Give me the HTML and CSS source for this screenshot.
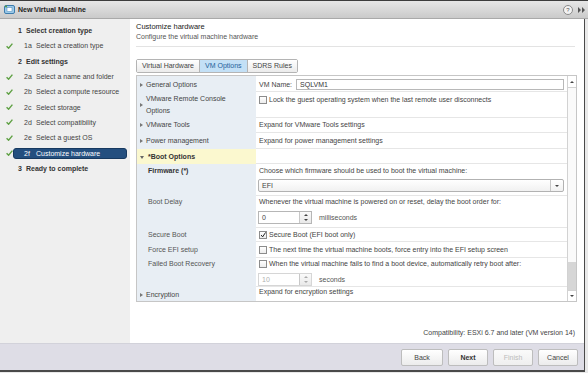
FILE: index.html
```html
<!DOCTYPE html>
<html lang="en">
<head>
  <meta charset="UTF-8" />
  <title>New Virtual Machine</title>
  <link rel="stylesheet" href="styles.css">
</head>
<body>
  <!-- Barra de título del asistente -->
  <div class="titlebar">
    <svg class="app-icon" viewBox="0 0 11 11">
      <rect x="0.5" y="1.5" width="10" height="8" rx="1.5" fill="#9ccbea" stroke="#3d7cad"/>
      <rect x="3" y="3.5" width="5" height="4" fill="#fff" stroke="#5a93c0" stroke-width="0.6"/>
      <circle cx="2" cy="2.5" r="1" fill="#4f9a3c"/>
    </svg>
    <span class="title">New Virtual Machine</span>
    <span class="spacer"></span>
    <span class="help">?</span>
    <svg class="expand" viewBox="0 0 7 6"><path d="M0 0l3 3-3 3zM4 0l3 3-3 3z" fill="#555"/></svg>
  </div>

  <div class="window">
    <div class="main">
      <!-- Pasos del asistente -->
      <div class="nav">
        <div class="step"><span class="num">1</span>Select creation type</div>
        <div class="sub"><svg class="check" viewBox="0 0 7 6"><path d="M0.6 3.2l2 2 3.8-4.6" fill="none" stroke="#5ea043" stroke-width="1.4"/></svg><span class="item"><span class="num">1a</span>Select a creation type</span></div>
        <div class="step"><span class="num">2</span>Edit settings</div>
        <div class="sub"><svg class="check" viewBox="0 0 7 6"><path d="M0.6 3.2l2 2 3.8-4.6" fill="none" stroke="#5ea043" stroke-width="1.4"/></svg><span class="item"><span class="num">2a</span>Select a name and folder</span></div>
        <div class="sub"><svg class="check" viewBox="0 0 7 6"><path d="M0.6 3.2l2 2 3.8-4.6" fill="none" stroke="#5ea043" stroke-width="1.4"/></svg><span class="item"><span class="num">2b</span>Select a compute resource</span></div>
        <div class="sub"><svg class="check" viewBox="0 0 7 6"><path d="M0.6 3.2l2 2 3.8-4.6" fill="none" stroke="#5ea043" stroke-width="1.4"/></svg><span class="item"><span class="num">2c</span>Select storage</span></div>
        <div class="sub"><svg class="check" viewBox="0 0 7 6"><path d="M0.6 3.2l2 2 3.8-4.6" fill="none" stroke="#5ea043" stroke-width="1.4"/></svg><span class="item"><span class="num">2d</span>Select compatibility</span></div>
        <div class="sub"><svg class="check" viewBox="0 0 7 6"><path d="M0.6 3.2l2 2 3.8-4.6" fill="none" stroke="#5ea043" stroke-width="1.4"/></svg><span class="item"><span class="num">2e</span>Select a guest OS</span></div>
        <div class="sub"><svg class="check" viewBox="0 0 7 6"><path d="M0.6 3.2l2 2 3.8-4.6" fill="none" stroke="#5ea043" stroke-width="1.4"/></svg><span class="item active"><span class="num">2f</span>Customize hardware</span></div>
        <div class="step"><span class="num">3</span>Ready to complete</div>
      </div>

      <!-- Contenido de la página -->
      <div class="content">
        <div class="head">
          <div class="head-title">Customize hardware</div>
          <div class="head-sub">Configure the virtual machine hardware</div>
        </div>

        <div class="tabs">
          <span class="tab">Virtual Hardware</span>
          <span class="tab active">VM Options</span>
          <span class="tab">SDRS Rules</span>
        </div>

        <div class="panel">
          <div class="rows">
            <div class="row">
              <div class="lbl lbl-first"><span class="caret"></span>General Options</div>
              <div class="val val-input"><span class="field-name">VM Name:</span><span class="text-input">SQLVM1</span></div>
            </div>
            <div class="row">
              <div class="lbl lbl-2"><span class="caret"></span><span>VMware Remote Console<br>Options</span></div>
              <div class="val"><span class="cb"></span>Lock the guest operating system when the last remote user disconnects</div>
            </div>
            <div class="row">
              <div class="lbl lbl-tight"><span class="caret"></span>VMware Tools</div>
              <div class="val val-tight">Expand for VMware Tools settings</div>
            </div>
            <div class="row">
              <div class="lbl"><span class="caret"></span>Power management</div>
              <div class="val">Expand for power management settings</div>
            </div>
            <div class="row">
              <div class="lbl lbl-open"><span class="caret down"></span>*Boot Options</div>
              <div class="val"></div>
            </div>
            <div class="row">
              <div class="lbl lbl-sub lbl-bold">Firmware (*)</div>
              <div class="val val-block">
                <div class="line">Choose which firmware should be used to boot the virtual machine:</div>
                <div class="select"><span class="select-text">EFI</span><span class="select-btn"><span class="tri-down"></span></span></div>
              </div>
            </div>
            <div class="row">
              <div class="lbl lbl-sub lbl-top">Boot Delay</div>
              <div class="val val-block val-top">
                <div class="line">Whenever the virtual machine is powered on or reset, delay the boot order for:</div>
                <div class="spin-row">
                  <span class="spinner"><span class="spin-text">0</span><span class="spin-btns"><span class="tri-up"></span><span class="tri-down"></span></span></span>
                  <span class="unit">milliseconds</span>
                </div>
              </div>
            </div>
            <div class="row">
              <div class="lbl lbl-sub lbl-mid">Secure Boot</div>
              <div class="val val-mid"><span class="cb checked"><svg viewBox="0 0 8 8"><path d="M1.5 4l2 2.5 4-6" fill="none" stroke="#222" stroke-width="1.3"/></svg></span>Secure Boot (EFI boot only)</div>
            </div>
            <div class="row">
              <div class="lbl lbl-sub">Force EFI setup</div>
              <div class="val"><span class="cb"></span>The next time the virtual machine boots, force entry into the EFI setup screen</div>
            </div>
            <div class="row">
              <div class="lbl lbl-sub lbl-top">Failed Boot Recovery</div>
              <div class="val val-block val-top val-last">
                <div class="line"><span class="cb"></span>When the virtual machine fails to find a boot device, automatically retry boot after:</div>
                <div class="spin-row">
                  <span class="spinner disabled"><span class="spin-text">10</span><span class="spin-btns"><span class="tri-up"></span><span class="tri-down"></span></span></span>
                  <span class="unit">seconds</span>
                </div>
              </div>
            </div>
            <div class="row">
              <div class="lbl lbl-end"><span class="caret"></span>Encryption</div>
              <div class="val val-end">Expand for encryption settings</div>
            </div>
          </div>
          <div class="scroll">
            <span class="scroll-btn"><span class="tri-up"></span></span>
            <span class="scroll-track"><span class="thumb"></span></span>
            <span class="scroll-btn"><span class="tri-down"></span></span>
          </div>
        </div>

        <div class="compat">Compatibility: ESXi 6.7 and later (VM version 14)</div>
      </div>
    </div>

    <!-- Botones del asistente -->
    <div class="footer">
      <button class="btn back">Back</button>
      <button class="btn next">Next</button>
      <button class="btn" disabled>Finish</button>
      <button class="btn">Cancel</button>
    </div>
  </div>
</body>
</html>
```

FILE: styles.css
```css
* {
  box-sizing: border-box;
}

body {
  margin: 0;
  background: #e9e9e9;
  font-family: "Liberation Sans", Arial, sans-serif;
  font-size: 7px;
  color: #333;
}

/* =================
   BARRA DE TÍTULO
   ================= */
.titlebar {
  width: 588px;
  height: 19px;
  display: flex;
  align-items: center;
  gap: 3px;
  padding: 0 3px 0 4px;
  background: linear-gradient(#e6e6e6, #cacaca);
  border-top: 1px solid #3c3c3c;
  border-bottom: 1px solid #a9a9a9;
}

.app-icon {
  width: 11px;
  height: 11px;
}

.title {
  font-weight: bold;
  font-size: 7px;
  color: #222;
}

.spacer {
  flex: 1;
}

.help {
  width: 10px;
  height: 10px;
  border: 1px solid #8a8a8a;
  border-radius: 50%;
  font-size: 6px;
  line-height: 8px;
  text-align: center;
  color: #555;
  background: #f2f2f2;
}

.expand {
  width: 7px;
  height: 6px;
  margin-left: 2px;
}

/* =================
   VENTANA
   ================= */
.window {
  width: 585px;
  height: 353px;
  display: flex;
  flex-direction: column;
  background: #fff;
  border-right: 1px solid #4a4a4a;
  border-bottom: 2px solid #4a4a4a;
}

.main {
  flex: 1;
  display: flex;
}

/* Pasos del asistente */
.nav {
  width: 130px;
  flex: none;
  background: #efefef;
  padding-top: 4px;
}

.step {
  height: 15.3px;
  line-height: 15.3px;
  padding-left: 18px;
  font-weight: bold;
  color: #333;
  display: flex;
}

.step .num {
  width: 8px;
}

.sub {
  height: 15.3px;
  display: flex;
  align-items: center;
  padding-left: 6px;
}

.check {
  width: 7px;
  height: 6px;
  flex: none;
}

.item {
  flex: 1;
  height: 11px;
  line-height: 11px;
  margin-right: 3px;
  padding-left: 11px;
  display: flex;
  color: #444;
  border-radius: 3px;
}

.item .num {
  width: 12px;
}

.item.active {
  background: #244f7f;
  border: 1px solid #17395f;
  padding-left: 10px;
  line-height: 9px;
  color: #fff;
}

/* Contenido */
.content {
  flex: 1;
  display: flex;
  flex-direction: column;
  padding: 3px 7px 0 6px;
}

.head {
  padding-bottom: 4px;
  margin-right: 2px;
  border-bottom: 1px solid #e3e3e3;
}

.head-title {
  line-height: 10px;
  font-size: 7.5px;
  color: #222;
}

.head-sub {
  line-height: 10px;
  color: #555;
}

.tabs {
  align-self: flex-start;
  margin-top: 12px;
  height: 14px;
  display: flex;
  border: 1px solid #b4b4b4;
  border-radius: 2px;
}

.tab {
  padding: 0 5px;
  line-height: 12px;
  color: #444;
  background: linear-gradient(#fff, #ebebeb);
  border-right: 1px solid #b4b4b4;
}

.tab:last-child {
  border-right: none;
}

.tab.active {
  background: #c3e0f6;
  color: #23609a;
}

/* Panel de opciones */
.panel {
  margin-top: 2px;
  height: 227px;
  display: flex;
  border: 1px solid #c6c6c6;
  overflow: hidden;
}

.rows {
  flex: 1;
  overflow: hidden;
}

.row {
  display: flex;
}

.lbl {
  width: 119px;
  flex: none;
  display: flex;
  align-items: flex-start;
  padding: 3px 3px 2px 3px;
  line-height: 10px;
  color: #444;
  background: #e8eef4;
}

.lbl-first {
  padding-top: 4px;
}

.lbl-2 {
  align-items: center;
  line-height: 12px;
  padding: 1px 3px 1px 3px;
}

.lbl-tight {
  padding-top: 2px;
}

.lbl-open {
  background: #fbf8cf;
  font-weight: bold;
  color: #333;
}

.lbl-sub {
  padding-left: 11px;
  color: #555;
}

.lbl-bold {
  padding-top: 2px;
  font-weight: bold;
  color: #333;
}

.lbl-top {
  padding-top: 1px;
}

.lbl-mid {
  padding-top: 2px;
}

.lbl-end {
  padding-top: 3px;
}

.caret {
  flex: none;
  width: 0;
  height: 0;
  margin: 3px 3px 0 0;
  border-left: 3px solid #777;
  border-top: 2px solid transparent;
  border-bottom: 2px solid transparent;
}

.lbl-2 .caret {
  margin-top: 0;
}

.caret.down {
  margin-top: 4px;
  margin-right: 4px;
  border-left: 2.5px solid transparent;
  border-right: 2.5px solid transparent;
  border-top: 3px solid #666;
  border-bottom: none;
}

.val {
  flex: 1;
  display: flex;
  align-items: flex-start;
  padding: 3px 3px 2px 3px;
  line-height: 10px;
  color: #444;
  white-space: nowrap;
  border-bottom: 1px solid #e6e6e6;
}

.val-input {
  align-items: center;
  padding: 3px 3px 1px 3px;
}

.val-tight {
  padding-top: 2px;
}

.val-block {
  flex-direction: column;
  align-items: stretch;
  padding: 2px 3px 3px 2px;
}

.val-top {
  padding-top: 1px;
}

.val-mid {
  padding: 2px 3px 1px 3px;
}

.val-last {
  padding-bottom: 0;
}

.val-end {
  padding-top: 0;
}

.line {
  display: flex;
  padding-left: 1px;
}

.field-name {
  flex: none;
  margin-right: 4px;
}

.text-input {
  flex: 1;
  height: 11px;
  line-height: 9px;
  padding-left: 3px;
  color: #333;
  border: 1px solid #b8b8b8;
}

/* Casillas de verificación */
.cb {
  flex: none;
  width: 8px;
  height: 8px;
  margin: 1px 2px 0 0;
  border: 1px solid #8c8c8c;
  background: linear-gradient(#fff, #ececec);
  display: flex;
}

.cb svg {
  width: 8px;
  height: 8px;
  margin: -1px 0 0 0;
}

/* Lista desplegable */
.select {
  margin-top: 3px;
  height: 13px;
  display: flex;
  border: 1px solid #b2b2b2;
  border-radius: 2px;
  background: linear-gradient(#fff, #f1f1f1);
}

.select-text {
  flex: 1;
  padding-left: 3px;
  line-height: 11px;
}

.select-btn {
  width: 13px;
  border-left: 1px solid #c6c6c6;
  display: flex;
  align-items: center;
  justify-content: center;
}

.tri-down {
  width: 0;
  height: 0;
  border-left: 2px solid transparent;
  border-right: 2px solid transparent;
  border-top: 2px solid #444;
}

.tri-up {
  width: 0;
  height: 0;
  border-left: 2px solid transparent;
  border-right: 2px solid transparent;
  border-bottom: 2px solid #444;
}

/* Selector numérico */
.spin-row {
  margin-top: 4px;
  display: flex;
  align-items: center;
  gap: 7px;
}

.spinner {
  width: 54px;
  height: 13px;
  display: flex;
  border: 1px solid #b6b6b6;
}

.spin-text {
  flex: 1;
  padding-left: 3px;
  line-height: 11px;
}

.spin-btns {
  width: 12px;
  display: flex;
  flex-direction: column;
  align-items: center;
  justify-content: space-evenly;
  border-left: 1px solid #c8c8c8;
  background: linear-gradient(#fafafa, #e9e9e9);
}

.spinner.disabled {
  border-color: #d6d6d6;
  color: #b0b0b0;
}

.spinner.disabled .tri-up {
  border-bottom-color: #aaa;
}

.spinner.disabled .tri-down {
  border-top-color: #aaa;
}

.unit {
  color: #555;
}

/* Barra de desplazamiento */
.scroll {
  width: 9px;
  flex: none;
  display: flex;
  flex-direction: column;
  background: #fafafa;
  border-left: 1px solid #d2d2d2;
}

.scroll-btn {
  height: 12px;
  display: flex;
  align-items: center;
  justify-content: center;
  background: #fff;
  border-bottom: 1px solid #d2d2d2;
}

.scroll-btn:last-child {
  height: 11px;
  border-bottom: none;
  border-top: 1px solid #d2d2d2;
}

.scroll-track {
  flex: 1;
  display: flex;
  flex-direction: column;
  justify-content: flex-end;
}

.thumb {
  height: 28px;
  background: #d6d6d6;
}

.compat {
  margin-top: 26px;
  padding-right: 2px;
  text-align: right;
  line-height: 10px;
  color: #444;
}

/* =================
   PIE CON BOTONES
   ================= */
.footer {
  height: 27px;
  display: flex;
  justify-content: flex-end;
  align-items: center;
  gap: 5px;
  padding-right: 6px;
  background: #dedde6;
  border-top: 1px solid #d2d2da;
}

.btn {
  width: 40px;
  height: 17px;
  padding: 0;
  font-family: "Liberation Sans", Arial, sans-serif;
  font-size: 7px;
  color: #444;
  background: linear-gradient(#fff, #ececec);
  border: 1px solid #bdbdbd;
  border-radius: 2px;
}

.btn.back {
  width: 42px;
}

.btn.next {
  font-weight: bold;
  color: #333;
}

.btn:disabled {
  color: #bbb;
  background: linear-gradient(#fafafa, #efefef);
}
```
